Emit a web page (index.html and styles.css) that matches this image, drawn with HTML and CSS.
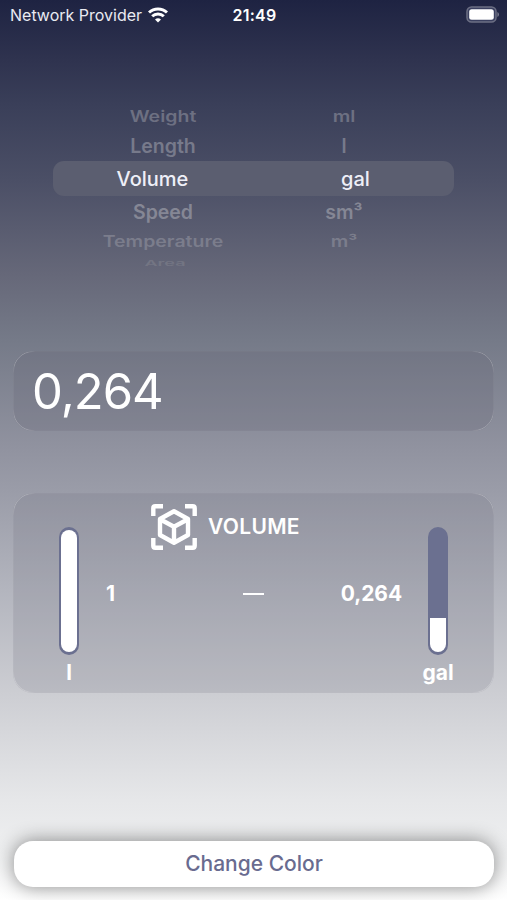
FILE: index.html
```html
<!DOCTYPE html>
<html lang="en">
<head>
<meta charset="utf-8">
<meta name="viewport" content="width=device-width, initial-scale=1">
<title>Unit Converter</title>
<link rel="stylesheet" href="styles.css">
</head>
<body>
<div class="screen">
  <header class="status">
    <div class="carrier"><span>Network Provider</span>
      <svg class="wifi" width="20" height="16" viewBox="0 0 20 16" fill="none" stroke="#fff" stroke-width="3"><path d="M1 5.500a13 13 0 0 1 18 0"/><path d="M4.200 9.300a8.300 8.300 0 0 1 11.600 0"/><path d="M10 15.600 7 12.600a4.300 4.300 0 0 1 6 0z" fill="#fff" stroke="none"/></svg>
    </div>
    <time class="clock">21:49</time>
    <svg class="battery" width="34" height="17" viewBox="0 0 34 17"><rect x="2" y="1" width="29" height="15" rx="4.500" fill="#3b4060" stroke="#6c6f84" stroke-width="1.500"/><rect x="4.200" y="3.200" width="24.600" height="10.600" rx="2.500" fill="#fff"/><path d="M32.500 6v5q1.300-.8 1.300-2.500T32.500 6z" fill="#8b8e9e"/></svg>
  </header>

  <section class="picker">
    <div class="row far"><span>Weight</span><span>ml</span></div>
    <div class="row near above"><span>Length</span><span>l</span></div>
    <div class="row selected"><span>Volume</span><span>gal</span></div>
    <div class="row near below"><span>Speed</span><span>sm³</span></div>
    <div class="row far lower"><span>Temperature</span><span>m³</span></div>
    <div class="row edge"><span>Area</span><span></span></div>
  </section>

  <section class="card value"><span>0,264</span></section>

  <section class="card result">
    <div class="gauge"><div class="tube"><div class="fill full"></div></div><span class="unit">l</span></div>
    <div class="center">
      <div class="title">
        <svg width="46" height="46" viewBox="0 0 46 46" fill="none" stroke="#fff" stroke-width="4.400" stroke-linejoin="round"><path d="M2.300 12V4.300q0-2 2-2H12M34 2.300h7.700q2 0 2 2V12M43.700 34v7.700q0 2-2 2H34M12 43.700H4.300q-2 0-2-2V34"/><path d="M23 7.300 37 15v16L23 38.700 9 31V15zM9.500 15.500 23 22.800l13.500-7.300M23 22.800V38"/></svg>
        <h1>VOLUME</h1>
      </div>
      <div class="amounts"><span>1</span><i class="dash"></i><span>0,264</span></div>
    </div>
    <div class="gauge"><div class="tube"><div class="fill part"></div></div><span class="unit">gal</span></div>
  </section>

  <button class="change"><span>Change Color</span></button>
</div>
</body>
</html>
```
FILE: styles.css
```css
* { box-sizing: border-box; }
body { margin: 0; font-family: Inter, "Liberation Sans", sans-serif; color: #fff; }
.screen {
  width: 507px; height: 900px; overflow: hidden;
  display: flex; flex-direction: column;
  background: linear-gradient(#1e2342 0, #2f334f 60px, #3a3f59 105px, #4b4f66 180px, #666879 275px, #757a88 340px, #9193a0 450px, #9a9ca8 490px, #b3b5be 590px, #cdced3 695px, #e6e7e9 800px, #eeeff0 850px, #fff 900px);
}
.status { height: 30px; padding: 0 8px 0 10px; display: grid; grid-template-columns: 1fr auto 1fr; align-items: center; font-size: 16px; }
.carrier { display: flex; align-items: center; gap: 6px; white-space: nowrap; color: #e9eaf2; }
.wifi { margin-top: -1px; }
.clock { font-weight: 600; letter-spacing: .25px; }
.battery { justify-self: end; margin-top: -1px; }
.picker { margin: 71px 53px 0; display: grid; grid-template-rows: 30px 29.5px 35.5px 31px 27px 16px; color: #858795; font-weight: 600; font-size: 19.5px; }
.row { display: grid; grid-template-columns: 1fr 1fr; align-items: center; justify-items: center; line-height: 1; }
.row span { display: block; }
.row:not(.selected) { padding: 0 19.5px; grid-template-columns: 181px 181px; }
.selected { background: #5b5e70; border-radius: 11px; color: #eeeff7; font-size: 20px; font-weight: 500; padding: 1px 0 0 1px; }
.selected span { margin-left: -3px; }
.selected span + span { margin-left: 3px; }
.far { color: #6d7082; }
.far span { transform: translateY(1px) scaleY(.8); }
.near.above { color: #777a8b; }
.near span { transform: translateY(1px); }
.lower { color: #7b7d8c; }
.edge { color: #737583; font-size: 18px; }
.edge span { transform: translateX(2px) scaleY(.43); }
.card { position: relative; margin: 0 13px; border-radius: 20px; }
.card::before {
  content: ""; position: absolute; inset: 0; border-radius: inherit; pointer-events: none;
  border: 1.5px solid rgba(255,255,255,.24);
  mask: linear-gradient(90deg, #000 14px, rgba(0,0,0,.1) 22px, rgba(0,0,0,.1) calc(100% - 22px), #000 calc(100% - 14px)), linear-gradient(#000 14px, rgba(0,0,0,.2) 22px, rgba(0,0,0,.2) calc(100% - 22px), #000 calc(100% - 14px));
  mask-composite: intersect;
}
.value { height: 80px; margin-top: 81px; padding-left: 19px; display: flex; align-items: center; font-size: 49px; line-height: 1; letter-spacing: -1px; background: rgba(98,99,117,.25); }
.result { height: 200px; margin-top: 62px; padding: 0 1px; display: grid; grid-template-columns: 110px 1fr 110px; font-size: 21px; font-weight: 600; background: rgba(108,112,127,.2); }
.gauge { display: flex; flex-direction: column; align-items: center; padding-top: 34px; }
.tube { width: 20px; height: 128px; border-radius: 10px; background: #6b7090; padding: 3px 2px; display: flex; align-items: end; }
.fill { width: 100%; background: #fff; border-radius: 8px; }
.full { height: 100%; }
.part { height: 34px; border-radius: 0 0 8px 8px; }
.unit { margin-top: 7px; line-height: 22px; font-weight: 700; }
.center { padding-top: 11px; }
.title { display: flex; align-items: center; gap: 11px; margin-left: 27px; }
.title svg { flex: none; }
h1 { font: inherit; margin: -1px 0 0; letter-spacing: .3px; }
.amounts { display: flex; align-items: center; margin: 30px -19px 0 -18px; line-height: 26px; font-weight: 700; }
.dash { width: 21px; height: 2px; background: #fff; margin: 0 auto 0 128px; }
.amounts span { padding-top: 1px; letter-spacing: -.1px; }
.change { font-family: inherit; font-size: 21px; font-weight: 500; line-height: 26px; color: #696b8f; height: 46px; margin: 148px 13px 0 14px; border: 0; border-radius: 19px; background: #fff; box-shadow: 0 0 19px rgba(0,0,0,.45); padding: 0 0 1px; }
```
